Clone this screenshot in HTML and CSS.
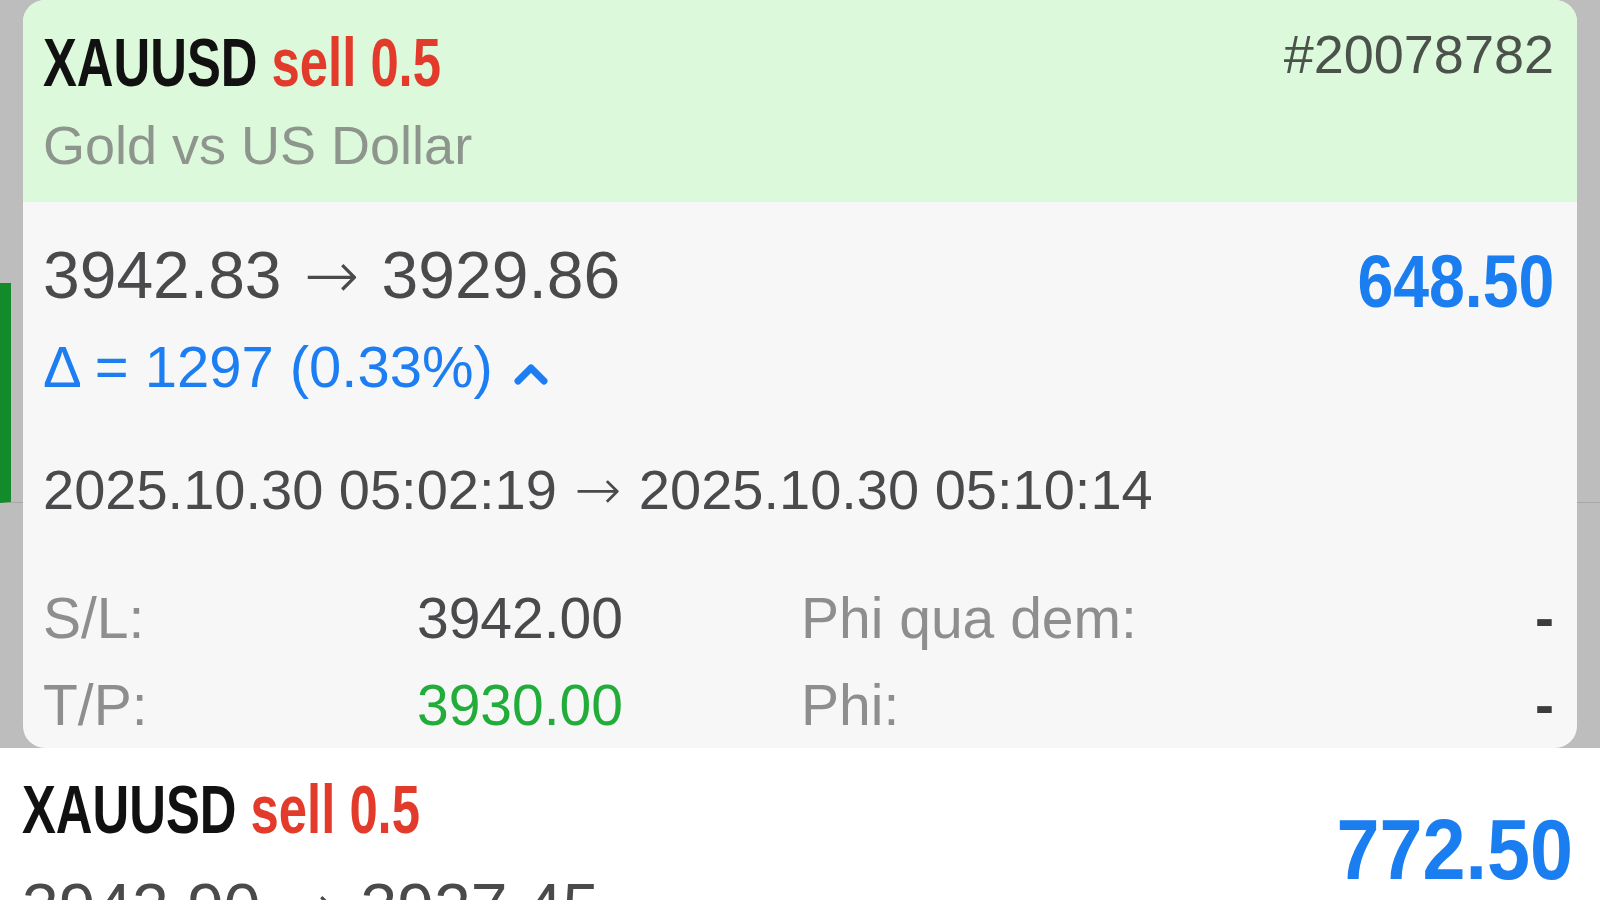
FILE: index.html
```html
<!DOCTYPE html>
<html lang="en">
<head>
  <meta charset="UTF-8">
  <meta name="viewport" content="width=device-width, initial-scale=1.0">
  <title>Deal details</title>
  <link rel="stylesheet" href="styles.css">
</head>
<body>
  <div class="screen">
    <div class="backdrop">
      <div class="dim-row"></div>
      <div class="deal-card">
        <div class="card-head">
          <div>
            <div class="title"><span class="title-text"><span class="symbol">XAUUSD</span> <span class="side">sell 0.5</span></span></div>
            <div class="desc">Gold vs US Dollar</div>
          </div>
          <div class="ticket">#20078782</div>
        </div>
        <div class="card-body">
          <div class="price-row">
            <div>
              <div class="prices">3942.83 <span class="arrow">→</span> 3929.86</div>
              <div class="delta">Δ = 1297 (0.33%)<svg class="chevron" width="36" height="28" viewBox="0 0 36 28"><polyline points="5,22 18,9 31,22" fill="none" stroke="#1c7ef2" stroke-width="7" stroke-linecap="round" stroke-linejoin="round"/></svg></div>
            </div>
            <div class="profit">648.50</div>
          </div>
          <div class="times">2025.10.30 05:02:19 <span class="arrow">→</span> 2025.10.30 05:10:14</div>
          <div class="details">
            <span class="label">S/L:</span>
            <span class="value">3942.00</span>
            <span class="label extra">Phi qua dem:</span>
            <span class="value dash">-</span>
            <span class="label">T/P:</span>
            <span class="value tp">3930.00</span>
            <span class="label extra">Phi:</span>
            <span class="value dash">-</span>
          </div>
        </div>
      </div>
    </div>
    <div class="deal">
      <div>
        <div class="title"><span class="title-text"><span class="symbol">XAUUSD</span> <span class="side">sell 0.5</span></span></div>
        <div class="prices next">3942.90 <span class="arrow">→</span> 3927.45</div>
      </div>
      <div class="profit big">772.50</div>
    </div>
  </div>
</body>
</html>
```

FILE: styles.css
```css
body { margin: 0; font-family: "Liberation Sans", Arial, sans-serif; background: #fff; }
.screen { width: 1600px; height: 900px; overflow: hidden; }

.backdrop { position: relative; box-sizing: border-box; height: 748px; padding-top: 283px; background: #bdbdbd; }
.dim-row { height: 219px; border-left: 11px solid #138b2a; border-bottom: 1px solid #a7a7a7; }

.deal-card { position: absolute; top: 0; left: 23px; right: 23px; bottom: 0; border-radius: 22px; overflow: hidden; background: #f7f7f7; }
.card-head { display: flex; justify-content: space-between; align-items: flex-start; padding: 23px 23px 22px 20px; background: #dcfadb; }

.title { font-size: 69px; line-height: 80px; font-weight: bold; white-space: nowrap; }
.title-text { display: inline-block; transform: scaleX(0.736); transform-origin: left center; }
.symbol { color: #111; }
.side { color: #e23b2b; }
.desc { margin-top: 8px; font-size: 54px; line-height: 69px; color: #8d958d; }
.ticket { margin-top: 1px; font-size: 54px; line-height: 60px; color: #4b524b; }

.card-body { padding: 35px 23px 0 20px; }
.price-row { display: flex; justify-content: space-between; align-items: flex-start; }
.prices { font-size: 66px; line-height: 76px; color: #4a4a4d; white-space: nowrap; }
.arrow { display: inline-block; margin: 0 4px; font-family: "DejaVu Sans", sans-serif; font-weight: 200; }
.delta { margin-top: 18px; font-size: 58px; line-height: 70px; color: #1c7ef2; }
.chevron { margin-left: 20px; vertical-align: baseline; }
.profit { margin-top: 3px; font-size: 74px; line-height: 84px; font-weight: bold; color: #1a7ef0; transform: scaleX(0.87); transform-origin: right center; }

.times { margin-top: 53px; font-size: 56px; line-height: 70px; color: #4a4a4d; white-space: nowrap; }
.times .arrow { margin: 0 2px; }

.details { display: grid; grid-template-columns: 200px 380px 1fr auto; margin-top: 50px; font-size: 57px; line-height: 87px; }
.label { color: #8e8e8e; }
.label.extra { padding-left: 178px; }
.value { text-align: right; color: #4a4a4d; }
.value.tp { color: #22ad3a; }
.value.dash { font-weight: bold; color: #3c3c3c; }

.deal { display: flex; justify-content: space-between; align-items: flex-start; padding: 22px 27px 0 22px; }
.prices.next { margin-top: 19px; }
.profit.big { margin-top: 32px; font-size: 85px; line-height: 96px; transform: scaleX(0.91); }
```
